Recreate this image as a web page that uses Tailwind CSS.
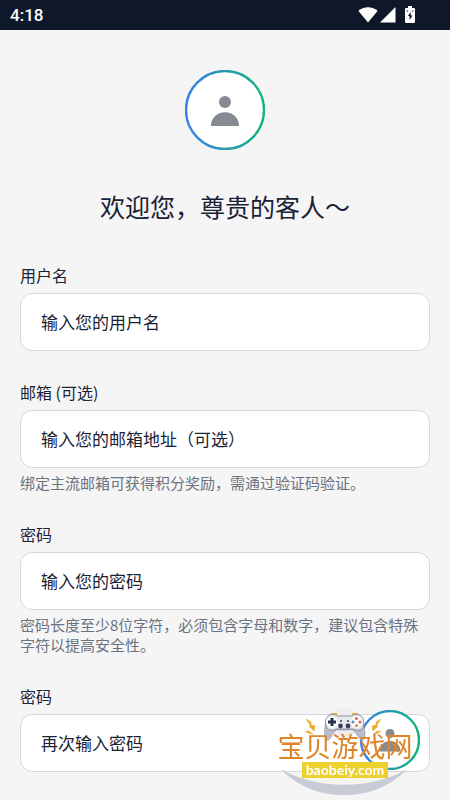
<!DOCTYPE html>
<html lang="zh-CN">
<head>
<meta charset="utf-8">
<meta name="viewport" content="width=device-width, initial-scale=1">
<title>注册</title>
<script src="https://cdn.jsdelivr.net/npm/@tailwindcss/browser@4"></script>
</head>
<body class="min-h-screen overflow-x-hidden bg-[#f5f5f5] font-['Noto_Sans_CJK_SC',sans-serif] text-[#1a2236]">
  <header class="flex h-[30px] items-center justify-between bg-[#0f172a] pr-[34px] pl-2.5 text-white">
    <time class="font-[Roboto,sans-serif] text-[17px] leading-5 font-medium">4:18</time>
    <div class="flex items-center gap-0.5">
      <svg class="h-4 w-5" viewBox="0 0 20 16" fill="currentColor" aria-hidden="true"><path d="M0.500 3.900C5.500-.8 14.500-.8 19.500 3.900L10 15.500z"/></svg>
      <svg class="h-4 w-4" viewBox="0 0 16 16" fill="currentColor" aria-hidden="true"><path d="M15.500 0v15.500H0z"/></svg>
      <svg class="ml-1.5 h-[18px] w-3" viewBox="0 0 12 18" aria-hidden="true"><path fill="currentColor" d="M4 0h4v2h1.800q1.200 0 1.200 1.200v12.600q0 1.200-1.200 1.200H2.200Q1 17 1 15.800V3.200Q1 2 2.200 2H4z"/><path fill="#0f172a" d="M6.800 6 3.800 10h1.700v4L8.500 9.500H6.800zM2.500 4.500H4v1H2.500zM8 4.500h1.500v1H8z"/></svg>
    </div>
  </header>

  <main class="px-5 pt-10 pb-7">
    <svg class="mx-auto size-20" viewBox="0 0 80 80" role="img" aria-label="头像">
      <defs><linearGradient id="ring" x1="0" x2="1" y1="0" y2="0"><stop offset="0" stop-color="#3b7fe8"/><stop offset="1" stop-color="#12b37c"/></linearGradient></defs>
      <circle cx="40" cy="40" r="39" fill="#fff" stroke="url(#ring)" stroke-width="2.400"/>
      <circle cx="40" cy="32" r="6" fill="#868a93"/>
      <path fill="#868a93" d="M26 56c0-18.500 28-18.500 28 0z"/>
    </svg>
    <h1 class="mt-10 text-center text-[25px] leading-8">欢迎您，尊贵的客人～</h1>

    <form class="mt-[42px] flex flex-col gap-[30px]">
      <div class="flex flex-col gap-[7px]">
        <label for="username" class="text-base leading-[22px]">用户名</label>
        <input id="username" type="text" placeholder="输入您的用户名" class="h-[58px] w-full rounded-xl border border-[#d6d7da] bg-white px-5 pb-0.5 text-[17px] placeholder:text-[#1a2236] placeholder:opacity-100">
      </div>
      <div class="flex flex-col gap-[7px]">
        <label for="email" class="text-base leading-[22px]">邮箱 (可选)</label>
        <input id="email" type="email" placeholder="输入您的邮箱地址（可选）" class="h-[58px] w-full rounded-xl border border-[#d6d7da] bg-white px-5 pb-0.5 text-[17px] placeholder:text-[#1a2236] placeholder:opacity-100">
        <p class="-mt-0.5 text-[15px] leading-5 text-[#6b7280]">绑定主流邮箱可获得积分奖励，需通过验证码验证。</p>
      </div>
      <div class="flex flex-col gap-[7px]">
        <label for="password" class="text-base leading-[22px]">密码</label>
        <input id="password" type="password" placeholder="输入您的密码" class="h-[58px] w-full rounded-xl border border-[#d6d7da] bg-white px-5 pb-0.5 text-[17px] placeholder:text-[#1a2236] placeholder:opacity-100">
        <p class="-mt-0.5 text-[15px] leading-5 text-[#6b7280]">密码长度至少8位字符，必须包含字母和数字，建议包含特殊字符以提高安全性。</p>
      </div>
      <div class="flex flex-col gap-[7px]">
        <label for="confirm" class="text-base leading-[22px]">密码</label>
        <input id="confirm" type="password" placeholder="再次输入密码" class="h-[58px] w-full rounded-xl border border-[#d6d7da] bg-white px-5 pb-0.5 text-[17px] placeholder:text-[#1a2236] placeholder:opacity-100">
      </div>
    </form>
  </main>

  <button type="button" aria-label="个人中心" class="fixed right-[30px] bottom-[30px] size-[60px] rounded-full">
    <svg class="size-full" viewBox="0 0 60 60" aria-hidden="true">
      <circle cx="30" cy="30" r="29" fill="#fff" stroke="url(#ring)" stroke-width="2.400"/>
      <circle cx="30" cy="23.500" r="4.500" fill="#868a93"/>
      <path fill="#868a93" d="M19.500 41.500c0-14 21-14 21 0z"/>
    </svg>
  </button>

  <div class="pointer-events-none fixed right-9 bottom-1 flex h-[90px] w-[138px] flex-col items-center">
    <svg class="absolute inset-0 size-full" viewBox="0 0 138 90" aria-hidden="true">
      <path fill="#c9cbd6" d="M5 63c36 21 90 21 126 0-32 35-94 35-126 0z"/>
      <circle cx="68" cy="17" r="15" fill="#eeeeef"/>
      <g transform="translate(0 -1)">
        <path fill="none" stroke="#eab13f" stroke-width="2" d="M55 9h6M76 9h6"/>
        <path fill="#b9bccb" stroke="#8c91a3" stroke-width=".5" d="M49.500 18c-1 6-2 14 1 17 4 2 6-8 10-10h16c4 2 7 12 11 10 3-3 1-11 0-17z"/>
        <path fill="#e8e9ef" stroke="#777c8f" stroke-width=".8" d="M52 11c3-2 7-2 10 0h13c3-2 8-2 10 0 4 3 3 10 1 13-2 2-7 1-9 0H60c-3 2-8 1-9-1-2-4-2-9 1-12z"/>
        <circle cx="56" cy="17" r="5.700" fill="#fff"/>
        <path fill="none" stroke="#27324a" stroke-width="3" d="M56 13v8M52 17h8"/>
        <g fill="#35415b"><circle cx="64.500" cy="21" r="2.400"/><circle cx="72" cy="21" r="2.400"/><circle cx="65" cy="16" r="1"/><circle cx="72" cy="16" r="1"/></g>
        <circle cx="80.500" cy="17" r="5.700" fill="#fff"/>
        <circle cx="80.500" cy="13.500" r="1.600" fill="#e0605e"/><circle cx="77" cy="17" r="1.600" fill="#5e8ccc"/><circle cx="84" cy="17" r="1.600" fill="#e0605e"/><circle cx="80.500" cy="20.500" r="1.600" fill="#dd8a45"/>
      </g>
      <g fill="#efa72d" stroke="#efa72d" stroke-width=".5"><path d="m30 13 5 3 0 3 4 1-1 5-5-5 1.500-.5zM29 25l4 .3 4 2.700-4-.6zM105 13l-5 3 0 3-4 1 1 5 5-5-1.500-.5zM105 25l-4 .3-4 2.700 4-.6z"/></g>
    </svg>
    <span class="relative mt-6 h-8 text-[27px] leading-8 whitespace-nowrap text-[#df8427]">宝贝游戏网</span>
    <span class="relative h-4 w-[86px] bg-[#ecd02c] text-center font-[Lato,sans-serif] text-sm leading-[15px] font-bold text-white">baobeiy.com</span>
  </div>
</body>
</html>
